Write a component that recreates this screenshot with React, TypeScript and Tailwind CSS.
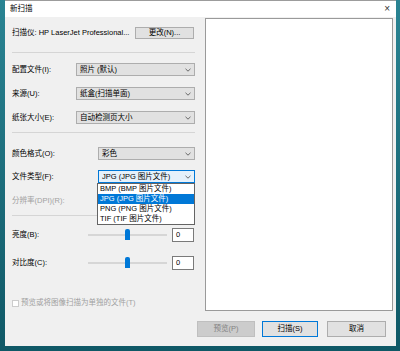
import type { ReactNode } from 'react'

const font = { fontFamily: '"Liberation Sans", "Noto Sans CJK SC", sans-serif' }

function Chevron() {
  return (
    <svg width="6" height="4" viewBox="0 0 6 4" className="shrink-0">
      <path d="M0.5 0.8 L3 3.2 L5.5 0.8" fill="none" stroke="#5a5a5a" strokeWidth="0.9" />
    </svg>
  )
}

type ComboProps = {
  value: string
  width: string
  focused?: boolean
  children?: ReactNode
}

function Combo({ value, width, focused, children }: ComboProps) {
  return (
    <div className={`relative ${width}`}>
      <div
        className={`flex h-[13px] items-center justify-between border pl-[3px] pr-[3px] ${
          focused ? 'border-[#0078d7] bg-[#e5f1fb]' : 'border-[#adadad] bg-[#e1e1e1]'
        }`}
      >
        <span className="leading-none">{value}</span>
        <Chevron />
      </div>
      {children}
    </div>
  )
}

function Row({ label, children, disabled }: { label: string; children?: ReactNode; disabled?: boolean }) {
  return (
    <div className="flex h-[13px] items-center justify-between">
      <span className={disabled ? 'text-[#a0a0a0]' : ''}>{label}</span>
      {children}
    </div>
  )
}

function Slider({ label, className }: { label: string; className: string }) {
  return (
    <div className={`flex h-[14px] items-center ${className}`}>
      <span className="w-[76px]">{label}</span>
      <div className="relative h-[2px] w-[79px] bg-[#d6d6d6]">
        <div className="absolute left-[37px] top-[-5px] h-[11px] w-[5px] rounded-t-[2px] bg-[#0078d7]" />
      </div>
      <div className="ml-[5px] flex h-[14px] w-[22px] items-center border border-[#7a7a7a] bg-white pl-[3px]">
        0
      </div>
    </div>
  )
}

const formats = ['BMP (BMP 图片文件)', 'JPG (JPG 图片文件)', 'PNG (PNG 图片文件)', 'TIF (TIF 图片文件)']

export default function App() {
  return (
    <div className="h-[351px] w-[400px] overflow-hidden bg-gradient-to-b from-[#2a8493] to-[#0f5866] pl-[5px] text-[7.5px] text-black" style={font}>
      <div className="flex h-[346px] w-[391px] flex-col border-t border-[#9c9c9c] bg-[#f0f0f0]">
        <div className="flex h-[16px] items-center justify-between bg-white pl-[5px] pr-[6px]">
          <span>新扫描</span>
          <span className="text-[10px] leading-none text-[#333]">×</span>
        </div>

        <div className="flex flex-1">
          <div className="flex w-[192px] flex-col pl-[7px] pr-[2px]">
            <div className="mt-[10px] flex h-[12px] items-center justify-between">
              <span>扫描仪: HP LaserJet Professional...</span>
              <div className="mr-[1px] flex h-[12px] w-[59px] items-center justify-center border border-[#adadad] bg-[#e1e1e1]">
                更改(N)...
              </div>
            </div>

            <div className="mt-[13px] h-px bg-[#d5d5d5]" />

            <div className="mt-[10px]">
              <Row label="配置文件(I):">
                <Combo value="照片 (默认)" width="w-[119px]" />
              </Row>
            </div>
            <div className="mt-[11px]">
              <Row label="来源(U):">
                <Combo value="纸盒(扫描单面)" width="w-[119px]" />
              </Row>
            </div>
            <div className="mt-[11px]">
              <Row label="纸张大小(E):">
                <Combo value="自动检测页大小" width="w-[119px]" />
              </Row>
            </div>

            <div className="mt-[8px] h-px bg-[#d5d5d5]" />

            <div className="mt-[14px]">
              <Row label="颜色格式(O):">
                <Combo value="彩色" width="w-[97px]" />
              </Row>
            </div>
            <div className="relative z-10 mt-[10px]">
              <Row label="文件类型(F):">
                <Combo value="JPG (JPG 图片文件)" width="w-[97px]" focused>
                  <ul className="absolute left-[-1px] top-full w-[98px] border border-[#646464] bg-white">
                    {formats.map((f) => (
                      <li
                        key={f}
                        className={`flex h-[10px] items-center pl-[2px] ${
                          f.startsWith('JPG') ? 'bg-[#0078d7] text-white' : ''
                        }`}
                      >
                        {f}
                      </li>
                    ))}
                  </ul>
                </Combo>
              </Row>
            </div>
            <div className="mt-[11px]">
              <Row label="分辨率(DPI)(R):" disabled />
            </div>

            <div className="mt-[8px] h-px bg-[#d5d5d5]" />

            <Slider label="亮度(B):" className="mt-[12px]" />
            <Slider label="对比度(C):" className="mt-[14px]" />

            <div className="mt-[29px] flex h-[8px] items-center gap-[2px] text-[#a0a0a0]">
              <div className="h-[7px] w-[7px] border border-[#cccccc] bg-white" />
              <span>预览或将图像扫描为单独的文件(T)</span>
            </div>
          </div>

          <div className="flex w-[199px] flex-col">
            <div className="ml-[8px] mt-[1px] h-[293px] w-[188px] border border-[#9a9a9a] bg-white" />
            <div className="mt-[10px] flex">
              <div className="flex h-[16px] w-[58px] items-center justify-center border border-[#bfbfbf] bg-[#cccccc] text-[#838383]">
                预览(P)
              </div>
              <div className="ml-[7px] flex h-[16px] w-[56px] items-center justify-center border border-[#0078d7] bg-[#e1e1e1]">
                扫描(S)
              </div>
              <div className="ml-[9px] flex h-[16px] w-[59px] items-center justify-center border border-[#adadad] bg-[#e1e1e1]">
                取消
              </div>
            </div>
          </div>
        </div>
      </div>
    </div>
  )
}
